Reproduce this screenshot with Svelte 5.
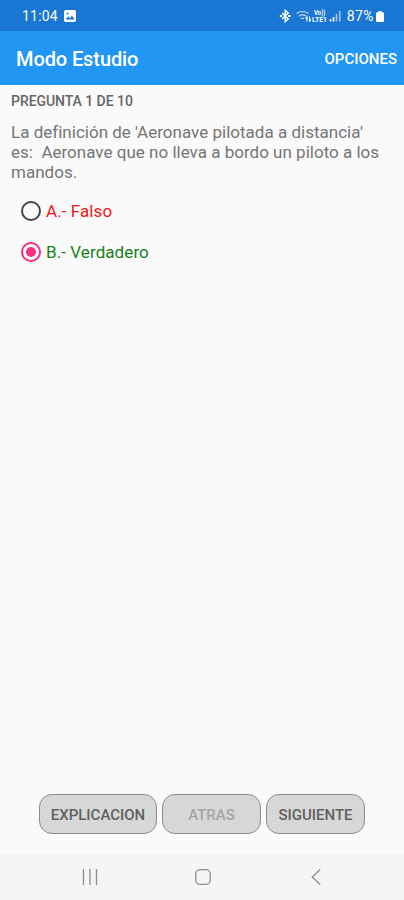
<script lang="ts">
  type Option = { id: string; label: string; correct: boolean };

  const options: Option[] = [
    { id: 'a', label: 'A.- Falso', correct: false },
    { id: 'b', label: 'B.- Verdadero', correct: true },
  ];

  let selected = $state('b');
</script>

<div class="screen">
  <div class="status">
    <span class="clock">11:04</span>
    <svg class="photo" width="12" height="12" viewBox="0 0 12 12">
      <rect width="12" height="12" rx="1.8" fill="#fff" />
      <path d="M1.6 9.6 4.3 6.2l1.7 2 2-2.6 2.6 4z" fill="#1976d2" />
      <circle cx="3.6" cy="3.5" r="1" fill="#1976d2" />
    </svg>
    <div class="indicators">
      <svg width="64" height="14" viewBox="0 0 64 14" fill="none" stroke="#fff">
        <path d="M3.2 4 9.2 10 6.2 12.6V1.4L9.2 4l-6 6" stroke-width="1.5" />
        <path d="M.8 7h2.400M9.200 7h2.400" stroke-width="2" />
        <g opacity=".75">
          <path d="M17.500 4.500q6-4 12 0M19.800 7.200q3.700-2.600 7.400 0M22 9.800q1.500-1.200 3 0" stroke-width="1.2" />
        </g>
        <path d="M28 12.500V8l-1.400 1.600M30.600 7.500V12l1.400-1.600" stroke-width="1.1" />
        <text x="35" y="6.400" class="tiny" textLength="11.500" lengthAdjust="spacingAndGlyphs">Vo))</text>
        <text x="33" y="12.800" class="tiny" textLength="15" lengthAdjust="spacingAndGlyphs">LTE1</text>
        <g stroke-width="1.600">
          <path d="M51.500 12.400V10M54.500 12.400V8" />
          <path d="M57.500 12.400V5M60.700 12.400V2" opacity=".6" />
        </g>
      </svg>
      <span class="percent">87%</span>
      <svg width="8" height="11" viewBox="0 0 8 11" fill="#fff">
        <path d="M2.500 0h3v1.300h1.300q1.200 0 1.200 1.200v7.300q0 1.200-1.200 1.200H1.200Q0 11 0 9.800V2.500q0-1.200 1.200-1.200h1.300z" />
      </svg>
    </div>
  </div>

  <header class="appbar">
    <h1>Modo Estudio</h1>
    <button class="menu">OPCIONES</button>
  </header>

  <main>
    <h2>PREGUNTA 1 DE 10</h2>
    <p class="question">La definición de 'Aeronave pilotada a distancia'<br />es:&nbsp; Aeronave que no lleva a bordo un piloto a los<br />mandos.</p>
    <div class="options" role="radiogroup">
      {#each options as option}
        <button
          class="option"
          class:correct={option.correct}
          role="radio"
          aria-checked={selected === option.id}
          onclick={() => (selected = option.id)}
        >
          <span class="radio" class:checked={selected === option.id}></span>
          <span>{option.label}</span>
        </button>
      {/each}
    </div>
  </main>

  <div class="actions">
    <button class="wide">EXPLICACION</button>
    <button disabled>ATRAS</button>
    <button>SIGUIENTE</button>
  </div>

  <nav>
    <svg width="16" height="16" viewBox="0 0 16 16"><path d="M1.500 0v16M8 0v16M14.500 0v16" /></svg>
    <svg width="16" height="16" viewBox="0 0 16 16"><rect x=".7" y=".7" width="14.600" height="14.600" rx="4.300" /></svg>
    <svg width="16" height="16" viewBox="0 0 16 16"><path d="M12.200.5 4.200 8l8 7.500" /></svg>
  </nav>
</div>

<style>
  :global(body) {
    margin: 0;
  }
  .screen {
    display: flex;
    flex-direction: column;
    width: 404px;
    height: 900px;
    background: #fafafa;
    font-family: Roboto, sans-serif;
    overflow: hidden;
  }
  button {
    padding: 0;
    border: none;
    background: none;
    font-family: inherit;
    cursor: pointer;
  }

  .status {
    display: flex;
    align-items: center;
    box-sizing: border-box;
    height: 31px;
    padding: 1px 20px 0 22px;
    background: #1976d2;
    color: #fff;
    font-size: 14px;
  }
  .clock {
    letter-spacing: 0.2px;
  }
  .photo {
    margin-left: 6px;
  }
  .indicators {
    display: flex;
    align-items: center;
    margin-left: auto;
  }
  .percent {
    margin: 0 2px 0 4px;
    letter-spacing: 0.4px;
  }
  .tiny {
    fill: #fff;
    stroke: none;
    font-size: 6.5px;
    font-weight: 700;
  }

  .appbar {
    display: flex;
    align-items: center;
    justify-content: space-between;
    height: 54px;
    padding: 0 7px 0 16px;
    background: #2196f3;
    color: #fff;
  }
  h1 {
    margin: 2px 0 0;
    font-size: 20px;
    font-weight: 500;
    letter-spacing: -0.1px;
  }
  .menu {
    margin-top: 1px;
    color: #fff;
    font-size: 15px;
    font-weight: 500;
  }

  main {
    flex: 1;
    padding: 8px 11px 0;
    color: #757575;
  }
  h2 {
    margin: 0;
    color: #666;
    font-size: 14px;
    font-weight: 500;
    line-height: 16px;
    letter-spacing: -0.05px;
  }
  .question {
    margin: 13px 0 0;
    font-size: 17px;
    line-height: 20px;
    letter-spacing: 0.01px;
    white-space: nowrap;
  }
  .options {
    display: flex;
    flex-direction: column;
    align-items: flex-start;
    margin: 8px 0 0 10px;
  }
  .option {
    display: flex;
    align-items: center;
    gap: 5px;
    height: 41px;
    color: #f01818;
    font-size: 17px;
    letter-spacing: 0.08px;
  }
  .option.correct {
    color: #188018;
  }
  .radio {
    display: flex;
    align-items: center;
    justify-content: center;
    box-sizing: border-box;
    width: 20px;
    height: 20px;
    border: 2px solid #444;
    border-radius: 50%;
  }
  .radio.checked {
    border-color: #f5317f;
  }
  .radio.checked::after {
    content: '';
    width: 10px;
    height: 10px;
    border-radius: 50%;
    background: #f5317f;
  }

  .actions {
    display: flex;
    justify-content: center;
    gap: 5px;
    padding-bottom: 20px;
  }
  .actions button {
    box-sizing: border-box;
    width: 99px;
    height: 40px;
    padding-top: 1px;
    border: 1px solid #8c8c8c;
    border-radius: 13px;
    background: #d6d8d7;
    color: #5f5f5f;
    font-size: 15px;
    font-weight: 500;
  }
  .actions .wide {
    width: 118px;
  }
  .actions button:disabled {
    color: #a5a5a5;
  }

  nav {
    display: flex;
    align-items: center;
    justify-content: center;
    gap: 97px;
    height: 46px;
    padding-left: 1px;
    background: #f5f5f5;
  }
  nav svg {
    fill: none;
    stroke: #8e8e8e;
    stroke-width: 1.3;
  }
</style>
